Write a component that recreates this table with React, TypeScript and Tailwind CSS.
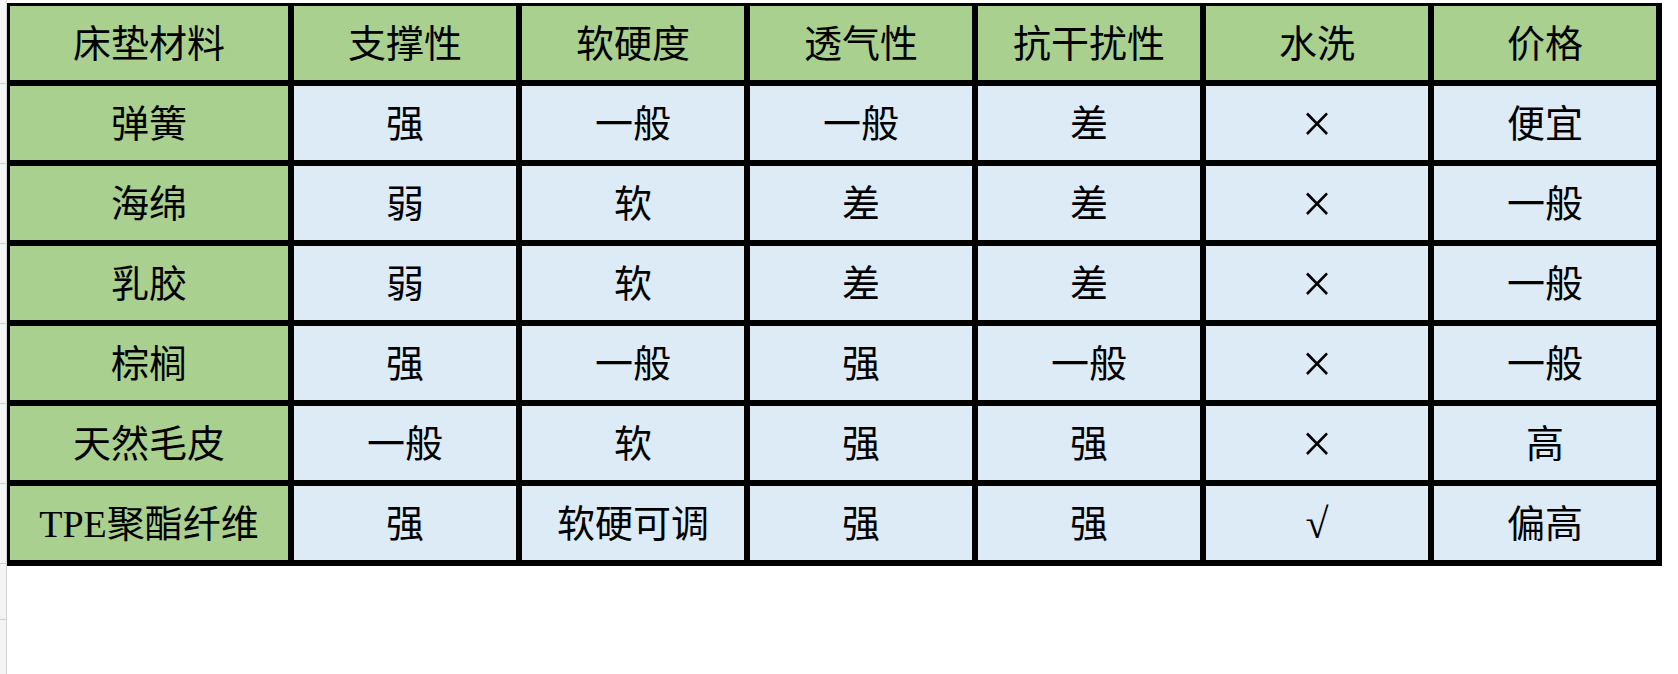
import React from "react";

const headers = ["床垫材料", "支撑性", "软硬度", "透气性", "抗干扰性", "水洗", "价格"];

const rows = [
  ["弹簧", "强", "一般", "一般", "差", "×", "便宜"],
  ["海绵", "弱", "软", "差", "差", "×", "一般"],
  ["乳胶", "弱", "软", "差", "差", "×", "一般"],
  ["棕榈", "强", "一般", "强", "一般", "×", "一般"],
  ["天然毛皮", "一般", "软", "强", "强", "×", "高"],
  ["TPE聚酯纤维", "强", "软硬可调", "强", "强", "√", "偏高"],
];

const font = {
  fontFamily: '"Liberation Serif", "Noto Sans CJK SC", serif',
};

export default function App() {
  return (
    <div className="w-[1678px] h-[674px] bg-white flex overflow-hidden" style={font}>
      {/* sheet row-header edge */}
      <div className="w-[7px] h-full bg-[#f4f4f4] border-r border-[#d4d4d4] flex flex-col">
        <div className="h-[84px] border-b border-[#d0d0d0]" />
        <div className="h-[80px] border-b border-[#d0d0d0]" />
        <div className="h-[80px] border-b border-[#d0d0d0]" />
        <div className="h-[80px] border-b border-[#d0d0d0]" />
        <div className="h-[80px] border-b border-[#d0d0d0]" />
        <div className="h-[80px] border-b border-[#d0d0d0]" />
        <div className="h-[80px] border-b border-[#d0d0d0]" />
        <div className="h-[56px] border-b border-[#d0d0d0]" />
      </div>

      <div className="pt-[3px]">
        <div className="grid grid-cols-[278px_repeat(6,222px)] gap-[6px] bg-black pt-[3px] pl-[3px] pr-[6px] pb-[6px] text-[38px] leading-none text-black">
          {headers.map((h) => (
            <div key={h} className="h-[74px] pt-[2px] bg-[#a9d08e] flex items-center justify-center">
              {h}
            </div>
          ))}
          {rows.map((r) =>
            r.map((c, i) => (
              <div
                key={r[0] + i}
                className={
                  i === 0
                    ? "h-[74px] pt-[2px] bg-[#a9d08e] flex items-center justify-center"
                    : "h-[74px] pt-[2px] bg-[#ddebf7] flex items-center justify-center"
                }
              >
                {c === "×" ? (
                  <span className="text-[54px] leading-none">×</span>
                ) : c === "√" ? (
                  <span className="text-[42px] leading-none">√</span>
                ) : (
                  c
                )}
              </div>
            ))
          )}
        </div>
      </div>
    </div>
  );
}
